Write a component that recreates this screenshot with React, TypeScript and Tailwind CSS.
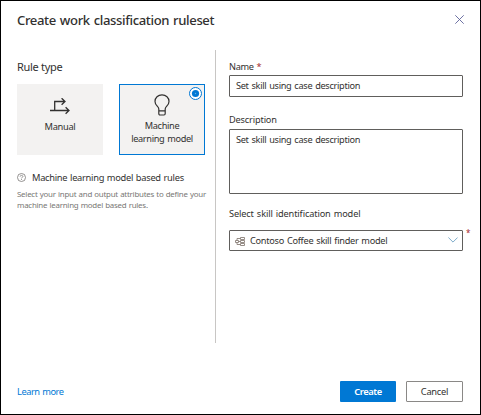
import React from "react";

function BranchIcon() {
  return (
    <svg width="20" height="18" viewBox="0 0 20 18" fill="none" stroke="#323130" strokeWidth="1.3">
      <path d="M0 12.5H18.6M4.7 12.5V3.5H14.8M11.6 .2L15 3.5L11.6 6.8M15.6 9.2L19 12.5L15.6 15.8" />
    </svg>
  );
}

function BulbIcon() {
  return (
    <svg width="16" height="22" viewBox="0 0 16 22" fill="none" stroke="#323130" strokeWidth="1.2">
      <path d="M4.8 16.9V15C4.8 12.5 1 11.5 1 7.4C1 3.6 4 .9 8 .9S15 3.6 15 7.4C15 11.5 11.2 12.5 11.2 15V19.5C11.2 20.5 10.8 21 10 21H6C5.2 21 4.8 20.5 4.8 19.5V16.9H11.2" />
    </svg>
  );
}

function ModelIcon() {
  return (
    <svg width="10" height="9" viewBox="0 0 10 9" fill="none" stroke="#8a8078" strokeWidth="0.9">
      <path d="M5.5 .5H9.5V2.5H5.5ZM5.5 3.5H9.5V5.5H5.5ZM5.5 6.5H9.5V8.5H5.5ZM.5 3.5H3.5V5.5H.5ZM2 3.5V1.5H5.5M3.5 4.5H5.5M2 5.5V7.5H5.5" />
    </svg>
  );
}

export default function App() {
  return (
    <div className="flex h-[415px] w-[481px] flex-col border border-black bg-white font-['Noto_Sans','Open_Sans',sans-serif] text-[#323130]">
      <header className="flex h-[49px] shrink-0 items-start justify-between pl-4 pr-[16px] pt-[9px]">
        <h1 className="whitespace-nowrap text-[13.1px] font-medium leading-[20px] tracking-[-0.38px] text-[#323130] [word-spacing:1px]">
          Create work classification ruleset
        </h1>
        <svg className="mt-[5px]" width="9" height="9" viewBox="0 0 9 9" stroke="#5c6299" strokeWidth="0.9">
          <path d="M.3 .3L8.7 8.7M8.7 .3L.3 8.7" />
        </svg>
      </header>

      <main className="flex h-[293px] shrink-0">
        <section className="w-[215px] shrink-0 border-r border-[#c8c6c4] pl-4 pt-[9px]">
          <h2 className="whitespace-nowrap text-[11px] leading-[16px] tracking-[-0.3px]">Rule type</h2>
          <div className="mt-[9px] flex gap-4">
            <div className="flex h-[71px] w-[86px] flex-col items-center bg-[#f3f2f1] pt-[14px]">
              <BranchIcon />
              <span className="mt-[4px] text-[9.3px] leading-[13px] tracking-[-0.3px]">Manual</span>
            </div>
            <div className="relative flex h-[71px] w-[86px] flex-col items-center border border-[#0078d4] bg-[#f3f2f1] pt-[9px]">
              <BulbIcon />
              <span className="mt-[3px] whitespace-nowrap text-center text-[9.2px] leading-[13px] tracking-[-0.33px] [word-spacing:0.7px]">
                Machine
                <br />
                learning model
              </span>
              <svg className="absolute right-[2px] top-[2px]" width="13" height="13" viewBox="0 0 13 13">
                <circle cx="6.5" cy="6.5" r="6" fill="#fff" stroke="#0078d4" />
                <circle cx="6.5" cy="6.5" r="3.6" fill="#0078d4" />
                <circle cx="6.5" cy="6.5" r="0.7" fill="#69afe5" />
              </svg>
            </div>
          </div>
          <div className="mt-[16px] flex h-[14px] items-center">
            <svg className="-mt-px" width="9" height="9" viewBox="0 0 9 9" fill="none" stroke="#797775" strokeWidth="0.8">
              <circle cx="4.5" cy="4.5" r="4" />
              <path d="M3.1 3.6C3.1 2 5.9 2 5.9 3.5C5.9 4.4 4.5 4.4 4.5 5.4M4.5 6.1V7" />
            </svg>
            <span className="ml-[6px] whitespace-nowrap text-[9.3px] leading-[14px] tracking-[-0.28px] [word-spacing:0.6px]">
              Machine learning model based rules
            </span>
          </div>
          <p className="mt-[4px] whitespace-nowrap text-[7.9px] leading-[11px] tracking-[-0.23px] text-[#797775] [word-spacing:0.4px]">
            Select your input and output attributes to define your
            <br />
            machine learning model based rules.
          </p>
        </section>

        <section className="w-[265px] pl-[13px] pt-[10px] text-[9.2px] leading-[14px] tracking-[-0.31px] [word-spacing:0.8px]">
          <label className="block whitespace-nowrap">
            Name <span className="text-[#a4262c]">*</span>
          </label>
          <div className="mt-[1px] flex h-[22px] w-[234px] items-center rounded-[1px] border border-[#605e5c] pl-[6px]">
            <span className="whitespace-nowrap">Set skill using case description</span>
          </div>
          <label className="mt-[16px] block whitespace-nowrap tracking-[-0.15px]">Description</label>
          <div className="mt-[2px] h-[65px] w-[234px] rounded-[1px] border border-[#605e5c] pl-[6px] pt-[3px]">
            <span className="whitespace-nowrap">Set skill using case description</span>
          </div>
          <label className="mt-[13px] block whitespace-nowrap tracking-[-0.12px]">Select skill identification model</label>
          <div className="mt-[9px] flex items-start">
            <div className="flex h-[21px] w-[234px] items-center rounded-[1px] border border-[#605e5c] pl-[5px] pr-[4px] pt-px">
              <ModelIcon />
              <span className="ml-[5px] flex-1 whitespace-nowrap tracking-[-0.27px]">Contoso Coffee skill finder model</span>
              <svg className="-mt-[3px]" width="10" height="6" viewBox="0 0 10 6" fill="none" stroke="#6fa3c4" strokeWidth="0.9">
                <path d="M.4 .5L5 5.1L9.6 .5" />
              </svg>
            </div>
            <span className="ml-[3px] -mt-[2px] text-[8px] leading-[10px] text-[#a4262c]">*</span>
          </div>
        </section>
      </main>

      <footer className="mt-[38px] flex h-[21px] items-center pl-4 pr-[17px] text-[9.3px] leading-[14px]">
        <a className="whitespace-nowrap tracking-[-0.47px] text-[#0078d4] [word-spacing:0.7px]">Learn more</a>
        <button className="ml-auto h-[21px] w-[56px] rounded-[1px] bg-[#0078d4] font-semibold tracking-[-0.4px] text-white">
          Create
        </button>
        <button className="ml-[10px] h-[21px] w-[57px] rounded-[1px] border border-[#8a8886] tracking-[-0.25px]">Cancel</button>
      </footer>
    </div>
  );
}
